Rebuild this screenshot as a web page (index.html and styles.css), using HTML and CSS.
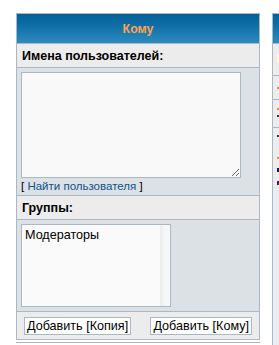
FILE: index.html
```html
<!DOCTYPE html>
<html lang="ru">
<head>
<meta charset="utf-8">
<title>Кому</title>
<link rel="stylesheet" href="styles.css">
</head>
<body>
<div class="page">
  <div class="panel">
    <div class="cat">Кому</div>
    <div class="row1 label">Имена пользователей:</div>
    <div class="row2 names">
      <textarea class="usernames"></textarea>
      <div class="find">[ <a href="#">Найти пользователя</a> ]</div>
    </div>
    <div class="row1 label">Группы:</div>
    <div class="row2 groups">
      <div class="listbox">
        <div class="options">
          <div class="option">Модераторы</div>
        </div>
        <div class="track"></div>
      </div>
    </div>
    <div class="row1 buttons">
      <button class="btn" type="button">Добавить [Копия]</button>
      <button class="btn" type="button">Добавить [Кому]</button>
    </div>
  </div>
  <div class="panel side">
    <div class="cat"></div>
    <div class="row1 s1"><span class="yellow"></span></div>
    <div class="row1 s2"><span class="dash orange"></span></div>
    <div class="row1 s3"><span class="dash orange"></span><span class="dash dark"></span></div>
    <div class="row1 s4">
      <span class="dash dark"></span>
      <span class="dash orange g1"></span>
      <span class="dash navy"></span>
      <span class="dash purple"></span>
    </div>
  </div>
</div>
<div class="next"></div>
</body>
</html>
```

FILE: styles.css
```css
html, body {
  margin: 0;
  padding: 0;
  background: #ffffff;
  overflow: hidden;
}

body {
  width: 279px;
  height: 345px;
  position: relative;
  font-family: "Liberation Sans", Arial, sans-serif;
  color: #000000;
}

.page {
  display: flex;
  gap: 12px;
  padding: 13px 0 0 16px;
  align-items: flex-start;
}

.panel {
  width: 242px;
  flex: none;
  display: flex;
  flex-direction: column;
  gap: 1px;
  background: #a9b8c2;
  border: 1px solid #a9b8c2;
}

.cat {
  height: 29px;
  background: linear-gradient(to bottom, #05609a 0%, #0d6ca3 35%, #2c8bbf 100%);
  color: #ffa34f;
  font-weight: bold;
  font-size: 12.4px;
  display: flex;
  align-items: center;
  justify-content: center;
}

.row1 {
  background: #ececec;
}

.row2 {
  background: #dce1e5;
}

.label {
  height: 23px;
  display: flex;
  align-items: center;
  padding-left: 5px;
  font-size: 12.5px;
  font-weight: bold;
}

.names {
  height: 127px;
  padding: 4px 0 0 4px;
  box-sizing: border-box;
}

.usernames {
  display: block;
  width: 220px;
  height: 106px;
  box-sizing: border-box;
  margin: 0;
  border: 1px solid #a9b8c2;
  background: #f9f9f9;
  font-family: "Liberation Sans", Arial, sans-serif;
  font-size: 12px;
}

.find {
  font-size: 11.5px;
  line-height: 14px;
  margin-top: 1px;
  color: #000000;
}

.find a {
  color: #105289;
  text-decoration: none;
}

.groups {
  height: 91px;
  padding: 4px 0 0 4px;
  box-sizing: border-box;
}

.listbox {
  width: 150px;
  height: 83px;
  box-sizing: border-box;
  border: 1px solid #a9b8c2;
  background: #fafafa;
  display: flex;
}

.options {
  flex: 1;
  padding: 3px 0 0 3px;
  font-size: 12.6px;
}

.track {
  width: 10px;
  background: linear-gradient(to right, #ececec 0%, #f5f5f5 40%, #f8f8f8 100%);
}

.buttons {
  height: 27px;
  display: flex;
  align-items: center;
  justify-content: space-between;
  padding: 0 7px 0 7px;
  box-sizing: border-box;
}

.btn {
  margin: 0;
  height: 18px;
  padding: 0 2px;
  border: 1px solid #a9b8c2;
  background: #ffffff;
  font-family: "Liberation Sans", Arial, sans-serif;
  font-size: 12.6px;
  color: #000000;
  line-height: 16px;
  border-radius: 0;
}

.side {
  width: 6px;
  border-right: none;
  border-bottom: none;
}

.side .row1 {
  position: relative;
  overflow: hidden;
}

.s1 { height: 31px; }
.s2 { height: 23px; }
.s3 { height: 27px; }
.s4 { height: 217px; }

.yellow {
  position: absolute;
  left: 4px;
  top: 10px;
  width: 40px;
  height: 9px;
  background: #fff6d6;
}

.dash {
  position: absolute;
  left: 4px;
  width: 4px;
  height: 2px;
}

.s2 .dash { top: 11px; }
.s3 .orange { top: 8px; }
.s3 .dark { top: 15px; }
.s4 .dark { top: 7px; }
.s4 .g1 { top: 29px; }
.s4 .navy { top: 40px; height: 4px; }
.s4 .purple { top: 53px; height: 4px; }

.orange { background: #e8923a; }
.dark { background: #333333; }
.navy { background: #1a1a4a; }
.purple { background: #4a1a5a; }

.next {
  position: absolute;
  left: 16px;
  top: 342px;
  width: 244px;
  height: 3px;
  border-top: 1px solid #a9b8c2;
  box-sizing: border-box;
}
```
